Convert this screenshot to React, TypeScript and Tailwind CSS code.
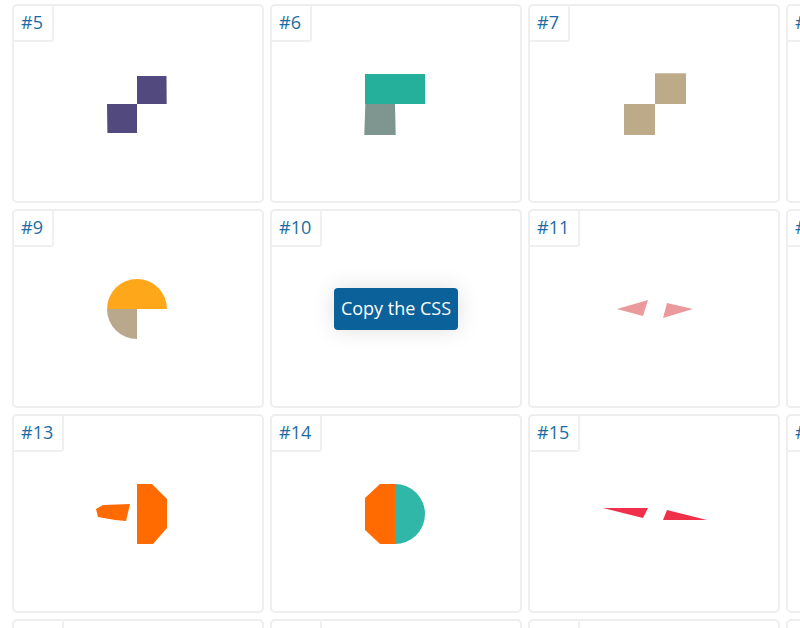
import React from "react";

type Shape = { kind: "poly"; pts: string; fill: string } | { kind: "path"; d: string; fill: string };

type CardData = { label: string; shapes?: Shape[]; button?: boolean };

const P = (pts: string, fill: string): Shape => ({ kind: "poly", pts, fill });
const D = (d: string, fill: string): Shape => ({ kind: "path", d, fill });

const rows: CardData[][] = [
  [
    {
      label: "#5",
      shapes: [P("-1,-28 28.5,-28 28.7,0 -1,0", "#524a7e"), P("-31,0 -1,0 -1,29 -30.6,29", "#524a7e")],
    },
    {
      label: "#6",
      shapes: [P("-31,-30 29,-30 29,0 -31,0", "#24b09b"), P("-30.7,0 -1,0 -0.3,31 -31.7,31", "#7e968f")],
    },
    {
      label: "#7",
      shapes: [P("1,-30.7 32,-30.7 32,0 1,0", "#bcaa88"), P("-30,0 1,0 1,31 -30,31", "#bcaa88")],
    },
    { label: "#8" },
  ],
  [
    {
      label: "#9",
      shapes: [D("M -31 0 A 30 30 0 0 1 29 0 Z", "#ffa71a"), D("M -1 0 L -31 0 A 30 30 0 0 0 -1 30 Z", "#b9a88c")],
    },
    { label: "#10", button: true },
    {
      label: "#11",
      shapes: [P("-37,0 -6,-9 -11,7", "#ea9a9c"), P("13,-6 39,0 9,9", "#ea9a9c")],
    },
    { label: "#12" },
  ],
  [
    {
      label: "#13",
      shapes: [
        P("-1,-30 14,-30 29,-15 29,14 15,30 -1,30", "#ff6b00"),
        P("-42,-5 -35,-9 -8,-10 -12,7 -23,6 -40,3", "#ff6b00"),
      ],
    },
    {
      label: "#14",
      shapes: [
        P("-16,-30 -1,-30 -1,30 -16,30 -31,16 -31,-16", "#ff6b00"),
        D("M -1 -30 A 30 30 0 0 1 -1 30 Z", "#31b7a8"),
      ],
    },
    {
      label: "#15",
      shapes: [P("-51,-6 -6,-6 -11,4", "#f0304a"), P("13,-4 53,6 9,6", "#f0304a")],
    },
    { label: "#16" },
  ],
  [{ label: "#17" }, { label: "#18" }, { label: "#19" }, { label: "#20" }],
];

function Card({ data }: { data: CardData }) {
  return (
    <div className="relative h-[199px] rounded-[5px] border-2 border-[#eeeeee] bg-white">
      <div className="absolute left-[-2px] top-[-2px] flex h-[38px] items-center rounded-br-[3px] border-b-2 border-r-2 border-[#f0f0f0] px-[9px] text-[18px] text-[#1c6ca3]">
        {data.label}
      </div>
      <div className="flex h-full w-full items-center justify-center">
        {data.button ? (
          <div className="flex h-[42px] items-center rounded-[4px] bg-[#0b6199] px-[7px] text-[18px] text-white shadow-[0_0_22px_rgba(0,0,0,0.13)]">
            Copy the CSS
          </div>
        ) : data.shapes ? (
          <svg width="120" height="80" viewBox="-60 -40 120 80">
            {data.shapes.map((s, i) =>
              s.kind === "poly" ? (
                <polygon key={i} points={s.pts} fill={s.fill} />
              ) : (
                <path key={i} d={s.d} fill={s.fill} />
              )
            )}
          </svg>
        ) : null}
      </div>
    </div>
  );
}

export default function App() {
  return (
    <div className="h-[628px] w-[800px] overflow-hidden bg-white font-['Open_Sans',sans-serif]">
      <div className="grid w-max grid-cols-[repeat(4,252px)] gap-[6px] pl-[12px] pt-[4px]">
        {rows.flat().map((c) => (
          <Card key={c.label} data={c} />
        ))}
      </div>
    </div>
  );
}
